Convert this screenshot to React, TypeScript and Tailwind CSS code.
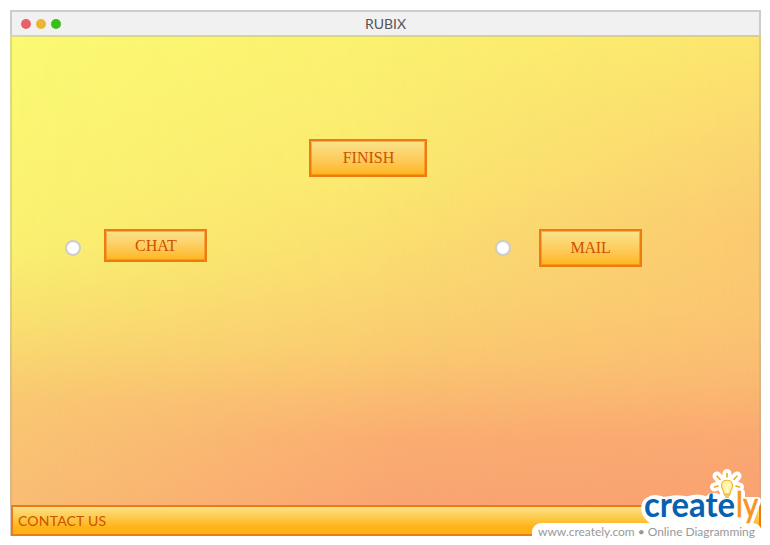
import type { ReactNode } from "react";

function CanvasButton({ children, className }: { children: ReactNode; className: string }) {
  return (
    <button
      className={`flex shrink-0 items-center justify-center border-2 border-[#ee7a12] bg-linear-to-b from-[#f9e48c] to-[#ffb612] font-['Liberation_Serif',serif] text-[16px] leading-none text-[#cc5200] inset-shadow-[0_0_0_1px_#ee7a1280] ${className}`}
    >
      {children}
    </button>
  );
}

function Radio({ className }: { className: string }) {
  return <span className={`size-4 shrink-0 rounded-full border-2 border-[#cccccc] bg-white ${className}`} />;
}

const rays = "M727 477V473.5M720 479.5L717 476M734 479.5L737 476M718 486L714.5 487M736 486L739.5 487";
const bulb = "M724 494C724 490 721.5 489 721.5 485.5C721.5 478.5 732.5 478.5 732.5 485.5C732.5 489 730 490 730 494Z";

function Watermark() {
  return (
    <div className="absolute right-0 bottom-0 h-[80px] w-[240px]">
      <div className="absolute right-[8px] bottom-0 h-[22px] w-[230px] rounded-t-[9px] bg-white" />
      <svg className="absolute inset-0" width="240" height="80" viewBox="530 465 240 80" fill="none">
        <g stroke="white" strokeWidth="8" strokeLinecap="round" strokeLinejoin="round">
          <path d={rays} strokeWidth="9" />
          <path d={bulb} fill="white" />
          <path
            d="M648 516C644 511 644 504 649 501C654 498 660 499 663 501L671 500C679 498 684 501 689 500C695 498 701 498 707 501L711 497H716L722 500L730 500L735 501L738 493H741V501H757L749 523H655Z"
            fill="white"
          />
        </g>
        <path d={rays} stroke="#f5a61c" strokeWidth="1.6" strokeLinecap="round" />
        <path d={bulb} fill="#fff4a5" stroke="#f4b52c" strokeWidth="1.2" />
        <path d="M727 493V486M725 484L727 487L729 484" stroke="#fffde0" />
        <path d="M724 495H730M725 497H729" stroke="#e9b43c" strokeWidth="1.3" />
        <g fontFamily="Lato, sans-serif" fontSize="34">
          <text x="644" y="517" textLength="91" lengthAdjust="spacingAndGlyphs" fontWeight="700" fill="#0861ae">create</text>
          <text x="736" y="517" textLength="22" lengthAdjust="spacingAndGlyphs" fill="#f7941e" stroke="#f7941e" strokeWidth=".7">ly</text>
        </g>
        <text x="538" y="536" textLength="217" fontFamily="Lato, sans-serif" fontSize="12" fill="#999999">www.creately.com • Online Diagramming</text>
      </svg>
    </div>
  );
}

export default function App() {
  return (
    <div className="relative h-[545px] w-[770px] overflow-hidden bg-white pt-[10px] pl-[10px]">
      <div className="flex h-[526px] w-[751px] flex-col bg-[#cccccc] pt-[2px]">
        <header className="mx-[2px] flex h-[23px] shrink-0 items-center bg-[#f1f1f1] font-['Lato',sans-serif]">
          <div className="flex w-[60px] gap-[5px] pl-[9px]">
            <span className="size-[10px] rounded-full bg-[#e95f6b]" />
            <span className="size-[10px] rounded-full bg-[#ebb632]" />
            <span className="size-[10px] rounded-full bg-[#3abe1c]" />
          </div>
          <h1 className="flex-1 pr-[60px] text-center text-[14px] leading-[23px] text-[#555555]">RUBIX</h1>
        </header>

        <main className="relative isolate h-[470px] shrink-0 bg-[linear-gradient(to_bottom,#fbfa73,#faf170_45%,#f9df70_62%,#f9c872_78%,#fabd73)]">
          <div className="absolute inset-0 -z-10 bg-[linear-gradient(to_bottom,#fbf16f,#fbe870_30%,#fad970_52%,#facb70_67%,#fabb71_77%,#faad71_86%,#f9a572)] mask-[linear-gradient(to_right,transparent,rgb(0_0_0/0.5)_25%,black_50%)]" />
          <div className="absolute inset-0 -z-10 bg-[linear-gradient(to_bottom,#fce66e,#fbd870_20%,#fbca70_40%,#fac671_58%,#fabb71_72%,#faa871_86%,#f9a271)] mask-[linear-gradient(to_right,transparent_50%,black)]" />
          <div className="pointer-events-none absolute inset-0 border-2 border-b-0 border-[#aaaaaa]/40" />
          <div className="flex justify-center pt-[104px] pr-[36px]">
            <CanvasButton className="h-[38px] w-[118px] pl-[2px]">FINISH</CanvasButton>
          </div>
          <div className="flex items-start pt-[52px] pl-[55px]">
            <Radio className="mt-[11px]" />
            <CanvasButton className="ml-[23px] h-[33px] w-[103px] pl-px">CHAT</CanvasButton>
            <Radio className="mt-[11px] ml-[288px]" />
            <CanvasButton className="ml-[28px] h-[38px] w-[103px] tracking-[-0.2px]">MAIL</CanvasButton>
          </div>
        </main>

        <footer className="ml-px flex h-[31px] shrink-0 items-center border-2 border-[#ee7a12] bg-[linear-gradient(to_bottom,#fbe287,#ffb316_75%)] pl-[5px] font-['Lato',sans-serif] text-[14px] leading-none tracking-[0.2px] text-[#cc5200]">
          CONTACT US
        </footer>
      </div>
      <Watermark />
    </div>
  );
}
